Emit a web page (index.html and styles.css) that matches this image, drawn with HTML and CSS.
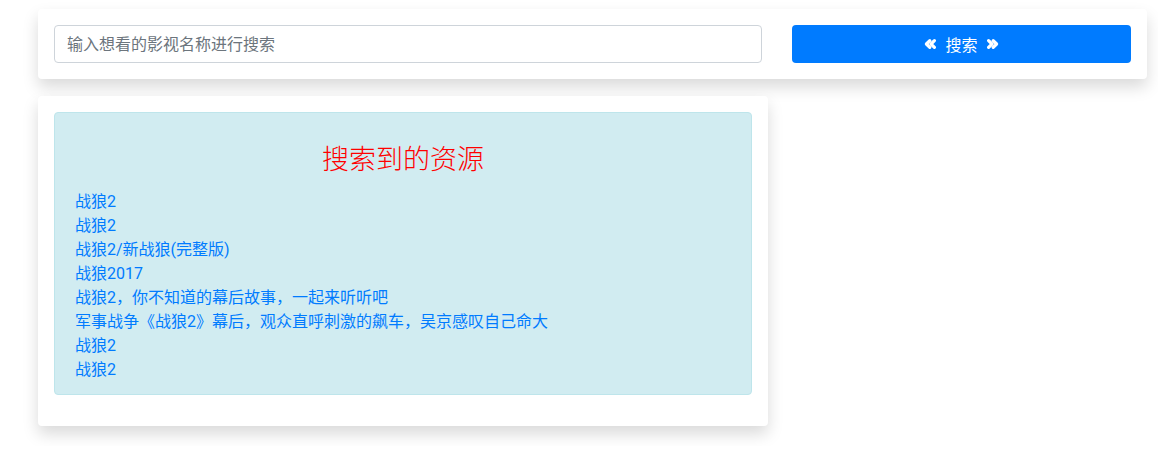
FILE: index.html
```html
<!DOCTYPE html>
<html lang="zh-CN">
<head>
  <meta charset="UTF-8">
  <meta name="viewport" content="width=device-width, initial-scale=1">
  <title>影视搜索</title>
  <link rel="stylesheet" href="styles.css">
</head>
<body>

  <div class="page">
    <div class="card search-card">
      <input class="form-control" type="text" placeholder="输入想看的影视名称进行搜索">
      <button class="btn-search">
        <svg class="icon" viewBox="0 0 12 12" width="12" height="12">
          <polyline points="5.8,2.6 2.4,6 5.8,9.4" />
          <polyline points="10.4,2.6 7,6 10.4,9.4" />
        </svg>
        <span>搜索</span>
        <svg class="icon" viewBox="0 0 12 12" width="12" height="12">
          <polyline points="1.6,2.6 5,6 1.6,9.4" />
          <polyline points="6.2,2.6 9.6,6 6.2,9.4" />
        </svg>
      </button>
    </div>

    <div class="card result-card">
      <div class="alert">
        <h3 class="result-title">搜索到的资源</h3>
        <ul class="result-list">
          <li><a href="#">战狼2</a></li>
          <li><a href="#">战狼2</a></li>
          <li><a href="#">战狼2/新战狼(完整版)</a></li>
          <li><a href="#">战狼2017</a></li>
          <li><a href="#">战狼2，你不知道的幕后故事，一起来听听吧</a></li>
          <li><a href="#">军事战争《战狼2》幕后，观众直呼刺激的飙车，吴京感叹自己命大</a></li>
          <li><a href="#">战狼2</a></li>
          <li><a href="#">战狼2</a></li>
        </ul>
      </div>
    </div>
  </div>

</body>
</html>
```

FILE: styles.css
```css
body {
  margin: 0;
  font-family: Roboto, "Noto Sans CJK SC", sans-serif;
  font-size: 16px;
  line-height: 1.5;
  color: #212529;
  background: #fff;
}
.page {
  padding: 9px 11px 20px 38px;
}
.card {
  background: #fff;
  border-radius: 4px;
  box-shadow: 0 0.5rem 1rem rgba(0, 0, 0, 0.15);
  padding: 16px;
}
.search-card {
  display: grid;
  grid-template-columns: 708px 1fr;
  gap: 30px;
}
.form-control {
  box-sizing: border-box;
  height: 38px;
  padding: 6px 12px;
  border: 1px solid #ced4da;
  border-radius: 4px;
  font-family: inherit;
  font-size: 16px;
  color: #495057;
}
.form-control::placeholder {
  color: #6c757d;
}
.btn-search {
  display: flex;
  align-items: center;
  justify-content: center;
  gap: 9px;
  height: 38px;
  border: none;
  border-radius: 4px;
  background: #007bff;
  color: #fff;
  font-family: inherit;
  font-size: 16px;
}
.icon polyline {
  fill: none;
  stroke: #fff;
  stroke-width: 3.2;
  stroke-linejoin: round;
  stroke-linecap: round;
}
.result-card {
  width: 698px;
  margin-top: 17px;
  padding-bottom: 31px;
}
.alert {
  background: #d1ecf1;
  border: 1px solid #bee5eb;
  border-radius: 4px;
  padding: 12px 20px;
}
.result-title {
  margin: 17px 0 16px;
  text-align: center;
  color: red;
  font-family: "Noto Sans CJK SC", sans-serif;
  font-weight: 300;
  font-size: 27px;
  line-height: 1.2;
}
.result-list {
  list-style: none;
  margin: 0;
  padding: 0;
  line-height: 24px;
}
.result-list a {
  color: #007bff;
  text-decoration: none;
}
```
